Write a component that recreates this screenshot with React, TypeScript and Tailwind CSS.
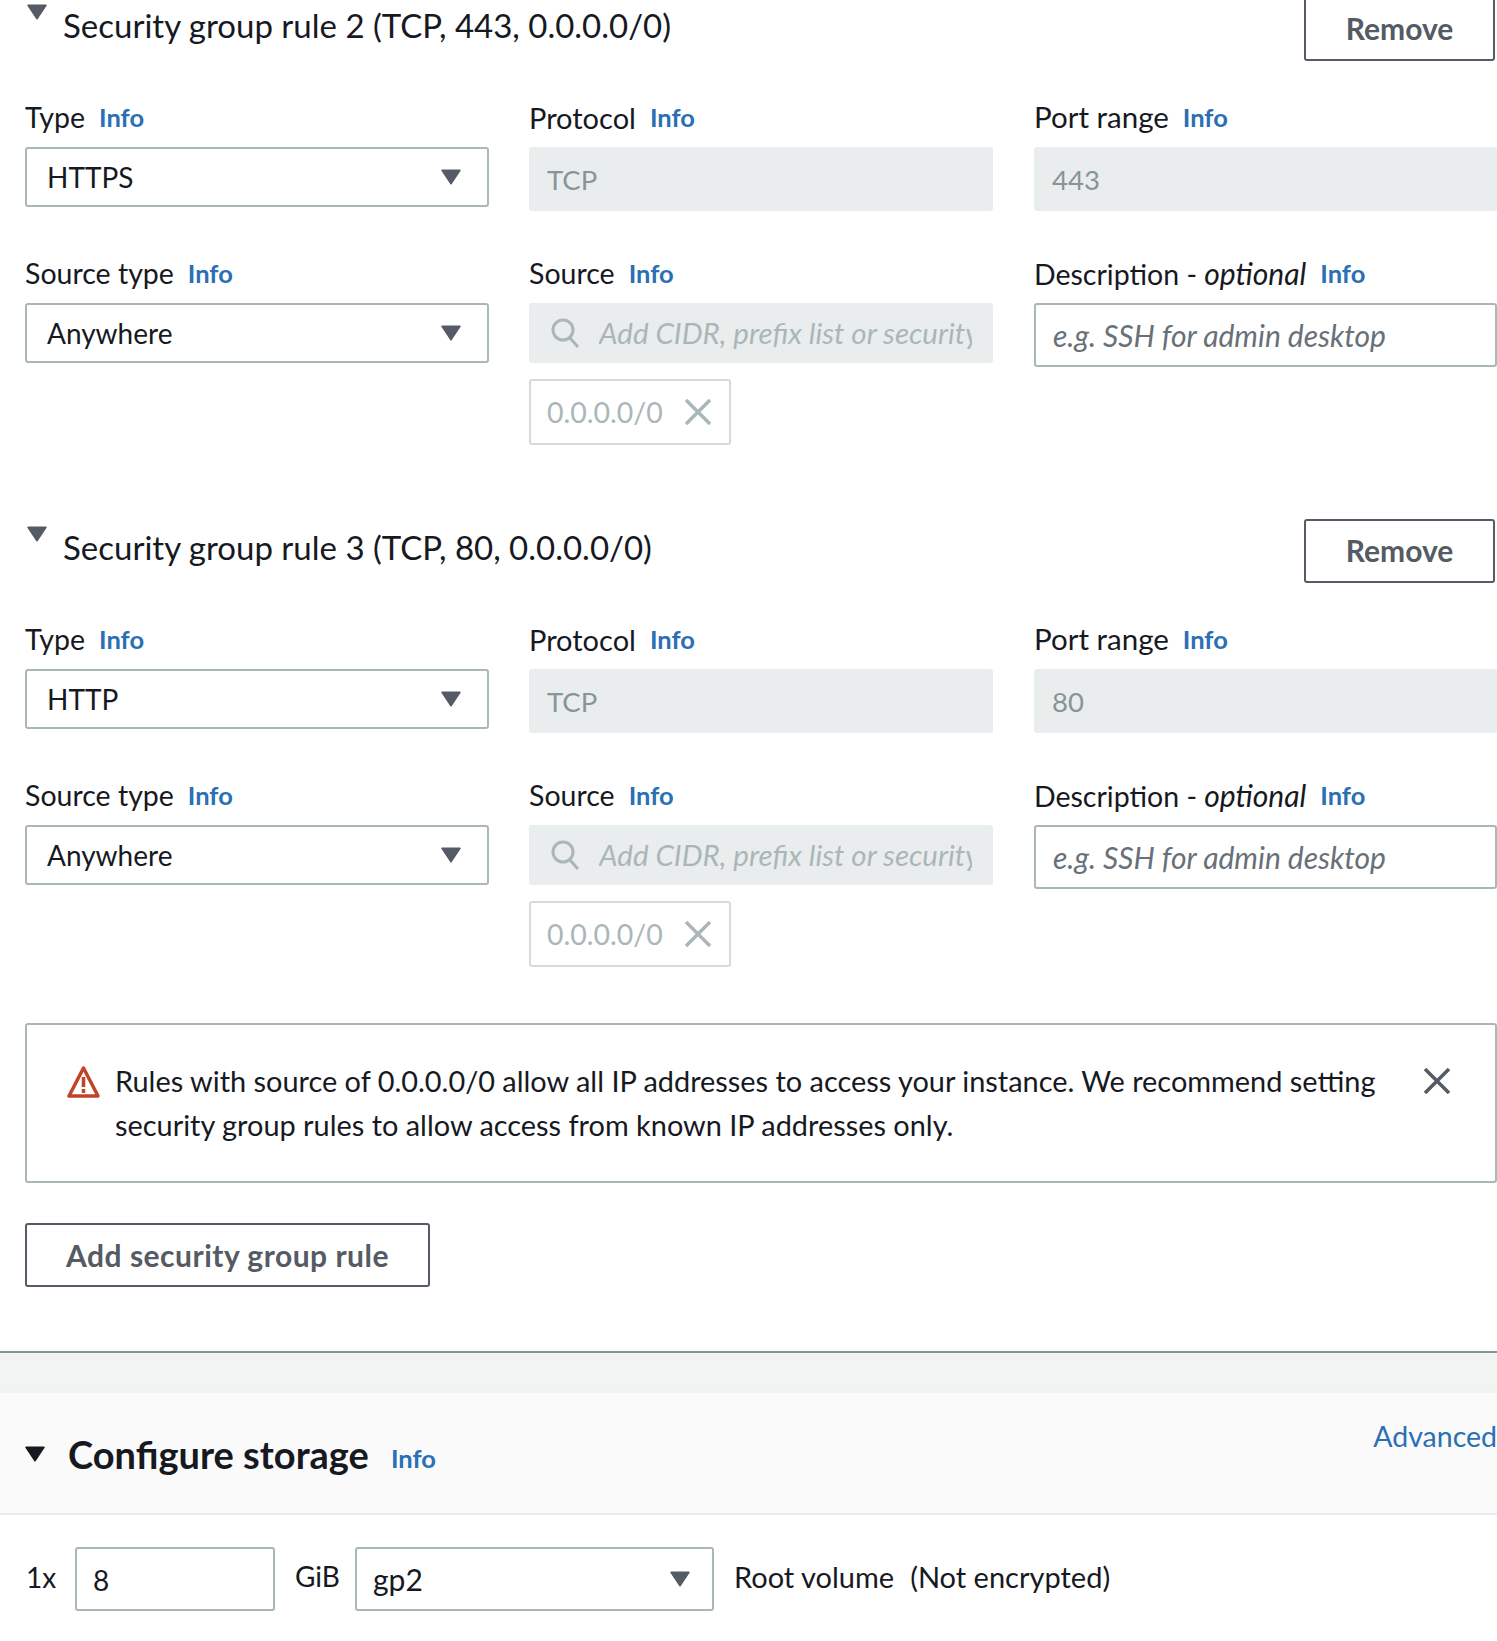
import React from "react";

const font = "[font-family:Lato,'Liberation_Sans',sans-serif]";

function Caret({ dark }: { dark?: boolean }) {
  return (
    <svg width="20" height="16" viewBox="0 0 20 16" className="shrink-0">
      <path d="M1 0.5h18a0.8 0.8 0 0 1 .6 1.3L10.8 15a1 1 0 0 1-1.6 0L.4 1.8A.8.8 0 0 1 1 .5z" fill={dark ? "#16191f" : "#545b64"} />
    </svg>
  );
}

function Info({ className = "" }: { className?: string }) {
  return <span className={`text-[25.5px] font-bold text-[#2b6fb5] ${className}`}>Info</span>;
}

function Label({ children, size = "text-[28.5px]" }: { children: React.ReactNode; size?: string }) {
  return (
    <div className={`flex h-10 items-center gap-[14px] pb-px text-[#16191f] ${size}`}>
      <span>{children}</span>
      <Info />
    </div>
  );
}

function Select({ value, className = "" }: { value: string; className?: string }) {
  return (
    <div className={`flex items-center justify-between rounded-[3px] border-2 border-[#aab7b8] bg-white pl-[20px] pr-[26px] text-[28px] text-[#16191f] ${className}`}>
      <span>{value}</span>
      <Caret />
    </div>
  );
}

function Disabled({ value }: { value: string }) {
  return (
    <div className="flex h-16 items-center rounded-[3px] bg-[#eaeded] pl-[18px] pt-[2px] text-[27.5px] text-[#879596]">{value}</div>
  );
}

function Rule({ title, type, port, first }: { title: string; type: string; port: string; first?: boolean }) {
  return (
    <section className={first ? "-mt-[3px]" : "mt-[74px]"}>
      <div className="flex h-[64px] items-start justify-between pr-[2px]">
        <div className="flex items-start gap-4">
          <span className="ml-[2px] mt-[7px]"><Caret /></span>
          <h3 className="mt-[6px] h-11 text-[33px] leading-[44px] text-[#16191f]">{title}</h3>
        </div>
        <button className="h-[64px] w-[191px] rounded-[3px] border-2 border-[#545b64] pb-[2px] text-[30px] font-bold text-[#545b64]">Remove</button>
      </div>
      <div className="mt-[37px] grid grid-cols-[464px_463px_1fr] gap-x-[41px]">
        <div>
          <Label>Type</Label>
          <Select value={type} className="mt-[9px] h-[60px]" />
        </div>
        <div className="-ml-px">
          <Label size="text-[29px]">Protocol</Label>
          <div className="mt-[9px]"><Disabled value="TCP" /></div>
        </div>
        <div>
          <Label size="text-[29.5px]">Port range</Label>
          <div className="mt-[9px]"><Disabled value={port} /></div>
        </div>
        <div className="mt-[43px]">
          <Label>Source type</Label>
          <Select value="Anywhere" className="mt-[9px] h-[60px]" />
        </div>
        <div className="-ml-px mt-[43px]">
          <Label>Source</Label>
          <div className="mt-[9px] flex h-[60px] items-center rounded-[3px] bg-[#eaeded] pl-[21px] pr-[21px]">
            <svg width="30" height="30" viewBox="0 0 30 30" fill="none" stroke="#aab7b8" strokeWidth="3" className="shrink-0">
              <circle cx="13" cy="12" r="10" />
              <path d="M20 20l8 9" />
            </svg>
            <span className="ml-[19px] overflow-hidden whitespace-nowrap text-[29.5px] italic text-[#aab7b8]">Add CIDR, prefix list or security groups</span>
          </div>
          <div className="mt-[16px] flex h-[66px] w-[202px] items-center rounded-[3px] border-2 border-[#d5dbdb] pl-[16px] text-[28.5px] text-[#aab7b8]">
            <span>0.0.0.0/0</span>
            <svg width="28" height="26" viewBox="0 0 28 26" fill="none" stroke="#aab7b8" strokeWidth="3.5" className="ml-[21px]">
              <path d="M2 1l24 24M26 1L2 25" />
            </svg>
          </div>
        </div>
        <div className="mt-[43px]">
          <Label>
            Description - <em className="text-[30px]">optional</em>
          </Label>
          <div className="mt-[9px] flex h-16 items-center rounded-[3px] border-2 border-[#aab7b8] pl-[17px] text-[30px] italic text-[#687078]">e.g. SSH for admin desktop</div>
        </div>
      </div>
    </section>
  );
}

export default function App() {
  return (
    <div className={`h-[1641px] w-[1497px] overflow-hidden bg-white ${font}`}>
      <div className="pl-[25px]">
        <Rule first title="Security group rule 2 (TCP, 443, 0.0.0.0/0)" type="HTTPS" port="443" />
        <Rule title="Security group rule 3 (TCP, 80, 0.0.0.0/0)" type="HTTP" port="80" />
        <div className="mt-[56px] flex h-[160px] items-start rounded-[3px] border-2 border-[#aab7b8] pl-[40px] pt-[34px]">
          <svg width="33" height="33" viewBox="0 0 33 33" fill="none" className="mt-[6px] shrink-0">
            <path d="M16.5 3L2 31h29z" stroke="#c0432a" strokeWidth="3.5" strokeLinejoin="round" />
            <path d="M16.5 12v10M16.5 24v4" stroke="#c0432a" strokeWidth="3.5" />
          </svg>
          <p className="ml-[15px] w-[1275px] text-[28.9px] leading-[44px] text-[#16191f]">
            Rules with source of 0.0.0.0/0 allow all IP addresses to access your instance. We recommend setting security group rules to allow access from known IP addresses only.
          </p>
          <svg width="26" height="26" viewBox="0 0 26 26" fill="none" stroke="#545b64" strokeWidth="3.5" className="ml-[34px] mt-[9px] shrink-0">
            <path d="M1 1l24 24M25 1L1 25" />
          </svg>
        </div>
        <button className="mt-[40px] block h-16 w-[405px] rounded-[3px] border-2 border-[#545b64] text-[30px] font-bold tracking-[0.5px] text-[#545b64]">Add security group rule</button>
      </div>

      <div className="mt-[64px] h-[40px] border-t-2 border-[#879596] bg-[#f2f3f3]" />
      <div className="flex h-[124px] items-start justify-between border-b-2 border-t-2 border-b-[#eaeded] border-t-[#f0f1f1] bg-[#fafafa] pl-[25px]">
        <div className="mt-[36px] flex items-center">
          <Caret dark />
          <h2 className="ml-[23px] text-[38px] font-bold leading-[50px] text-[#16191f]">Configure storage</h2>
          <Info className="ml-[22px] mt-[8px]" />
        </div>
        <a className="mt-[22px] text-[28.5px] text-[#2b6fb5]">Advanced</a>
      </div>
      <div className="mt-[32px] flex items-start pl-[26px] text-[29px] text-[#16191f]">
        <span className="mt-[9px] w-[49px] text-[28px]">1x</span>
        <div className="flex h-[64px] w-[200px] items-center rounded-[3px] border-2 border-[#aab7b8] pl-[16px] pt-[2px] text-[28px]">8</div>
        <span className="ml-[20px] mt-[8px] w-[60px] text-[28px]">GiB</span>
        <Select value="gp2" className="h-[64px] w-[359px] !pl-[16px] !pr-[22px] !text-[30px]" />
        <span className="ml-[20px] mt-[8px]">Root volume</span>
        <span className="ml-[16px] mt-[8px]">(Not encrypted)</span>
      </div>
    </div>
  );
}
